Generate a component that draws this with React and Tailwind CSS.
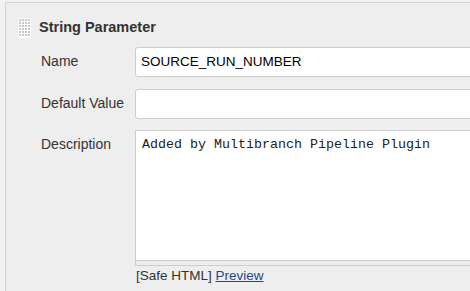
const font = { fontFamily: '"Liberation Sans", Arial, sans-serif' }

const Grip = () => (
  <svg width="13" height="20" viewBox="0 0 13 20" className="shrink-0">
    <rect width="13" height="20" fill="#ffffff" />
    {[0, 1, 2, 3, 4, 5].map((r) =>
      [0, 1, 2, 3].map((c) => (
        <rect key={`${r}-${c}`} x={1 + c * 3} y={1 + r * 3} width="2" height="2" fill="#c8c8c8" />
      ))
    )}
  </svg>
)

export default function App() {
  return (
    <div
      className="h-[291px] w-[470px] overflow-hidden bg-[#f2f2f2] pt-[2px] pl-[5px] text-[14px] text-[#333]"
      style={font}
    >
      <div className="h-full w-[600px] border-t border-l border-[#d3d3d3] bg-[#eeeeee]">
        {/* header */}
        <div className="flex items-center gap-[8px] pt-[14px] pl-[12px]">
          <Grip />
          <span className="text-[14.5px] font-bold text-[#333]">String Parameter</span>
        </div>

        {/* Name */}
        <div className="mt-[8px] flex items-center">
          <div className="w-[129px] pl-[35px]">Name</div>
          <div className="flex h-[30px] w-[400px] items-center rounded-[3px] border border-[#cccccc] bg-white px-[5px] text-[13.5px] text-black">
            SOURCE_RUN_NUMBER
          </div>
        </div>

        {/* Default Value */}
        <div className="mt-[12px] flex items-center">
          <div className="w-[129px] pl-[35px]">Default Value</div>
          <div className="h-[30px] w-[400px] rounded-[3px] border border-[#cccccc] bg-white" />
        </div>

        {/* Description */}
        <div className="mt-[11px] flex items-start">
          <div className="w-[129px] pt-[4px] pl-[35px]">Description</div>
          <div className="w-[400px]">
            <div
              className="h-[131px] border border-[#cccccc] bg-white px-[6px] pt-[4px] text-[13.33px] text-[#222]"
              style={{ fontFamily: '"Liberation Mono", "Courier New", monospace' }}
            >
              Added by Multibranch Pipeline Plugin
            </div>
            <div className="-mt-px h-[6px] border border-[#cccccc] bg-[#eeeeee]" />
            <div className="mt-[2px] pl-px text-[13.5px] leading-[16px]">
              [Safe HTML]{' '}
              <a href="#" className="text-[#204a87] underline">
                Preview
              </a>
            </div>
          </div>
        </div>
      </div>
    </div>
  )
}
